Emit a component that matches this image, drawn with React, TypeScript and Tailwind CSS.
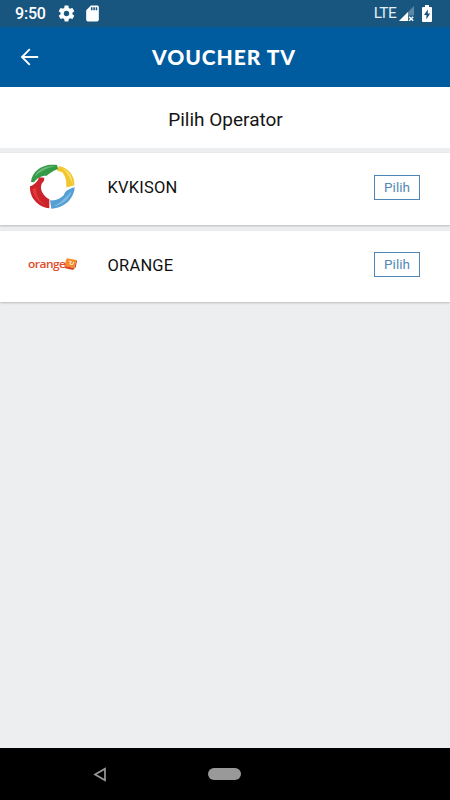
import type { ReactNode } from 'react'

function StatusBar() {
  return (
    <div className="flex h-[27px] items-center bg-[#18557f] text-white">
      <span className="ml-[15px] w-[42px] text-[16px] leading-[27px] font-medium tracking-[-0.2px]">9:50</span>
      <svg className="h-[19px] w-[19px] shrink-0" viewBox="0 0 24 24" fill="currentColor">
        <path d="M19.43 12.98c.04-.32.07-.64.07-.98s-.03-.66-.07-.98l2.11-1.65c.19-.15.24-.42.12-.64l-2-3.46c-.12-.22-.39-.3-.61-.22l-2.49 1c-.52-.4-1.08-.73-1.69-.98l-.38-2.65C14.46 2.18 14.25 2 14 2h-4c-.25 0-.46.18-.49.42l-.38 2.65c-.61.25-1.17.59-1.69.98l-2.49-1c-.23-.09-.49 0-.61.22l-2 3.46c-.13.22-.07.49.12.64l2.11 1.65c-.04.32-.07.65-.07.98s.03.66.07.98l-2.11 1.65c-.19.15-.24.42-.12.64l2 3.46c.12.22.39.3.61.22l2.49-1c.52.4 1.08.73 1.69.98l.38 2.65c.03.24.24.42.49.42h4c.25 0 .46-.18.49-.42l.38-2.65c.61-.25 1.17-.59 1.69-.98l2.49 1c.23.09.49 0 .61-.22l2-3.46c.12-.22.07-.49-.12-.64l-2.11-1.65zM12 15.5c-1.93 0-3.5-1.57-3.5-3.5s1.57-3.5 3.5-3.5 3.5 1.57 3.5 3.5-1.57 3.5-3.5 3.5z" />
      </svg>
      <svg className="ml-[7px] h-[19px] w-[19px] shrink-0" viewBox="0 0 24 24" fill="currentColor">
        <path d="M18 2h-8L4.02 8 4 20c0 1.1.9 2 2 2h12c1.1 0 2-.9 2-2V4c0-1.1-.9-2-2-2zm-6 6h-2V4h2v4zm3 0h-2V4h2v4zm3 0h-2V4h2v4z" />
      </svg>
      <span className="ml-auto text-[15.5px] leading-[27px] tracking-[-0.7px] text-[#e3eef5]">LTE</span>
      <svg className="ml-[3px] h-[16px] w-[16px] shrink-0" viewBox="0 0 16 16">
        <path d="M15 0v15H0z" fill="#fff" opacity=".3" />
        <path d="M9 6v9H0z" fill="#fff" />
        <path d="M9.5 9.5H16V16H9.5z" fill="#18557f" />
        <path d="m10.2 10.8 4 4m0-4-4 4" stroke="#fff" strokeWidth="1.5" />
      </svg>
      <svg className="mr-[18px] ml-[7px] h-[17px] w-[10px] shrink-0" viewBox="0 0 10 17">
        <path d="M3 0h4v2h2q1 0 1 1v13q0 1-1 1H1q-1 0-1-1V3q0-1 1-1h2z" fill="#fff" />
        <path d="M5.8 4.5 2 10h2.4v4.3L8.2 8.6H5.8z" fill="#18557f" />
      </svg>
    </div>
  )
}

function Header() {
  return (
    <header className="grid h-[60px] grid-cols-[60px_1fr_60px] items-center bg-[#005b9f] text-white">
      <svg className="ml-[20px] h-[18px] w-[19px]" viewBox="0 0 19 18" fill="none" stroke="currentColor" strokeWidth="1.9">
        <path d="M18.2 9H2.4M9.8 1.2 2 9l7.8 7.8" />
      </svg>
      <h1 className="-ml-[2px] scale-x-[1.05] pt-px text-center font-['Lato',sans-serif] text-[20px] leading-[59px] font-black tracking-[0.9px] whitespace-nowrap">
        VOUCHER TV
      </h1>
    </header>
  )
}

function KvisionLogo() {
  return (
    <svg className="-mt-[3px] h-[65px] w-[70px]" viewBox="0 0 210 195">
      <path d="M33 81C35 50 67 23 111 30L115 43C101 45 93 54 80 62C66 61 50 69 42 82Z" fill="#35994a" />
      <path d="M43 65C54 42 76 31 106 33C83 37 63 48 43 65Z" fill="#6cb879" />
      <path d="M117 33C146 39 165 64 163 91C156 92 148 97 139 97C140 79 137 65 127 52L111 47Z" fill="#f2c62e" />
      <path d="M129 40C148 50 158 67 158 88C151 72 144 57 129 40Z" fill="#f9df6d" />
      <path d="M164 97C162 132 132 160 94 161L90 136C106 138 120 132 132 120C134 108 149 101 164 97Z" fill="#549fd3" />
      <path d="M155 107C149 132 126 150 100 154C122 143 137 128 155 107Z" fill="#81bce5" />
      <path d="M30 94C39 92 47 84 54 75L57 67L73 68L72 77L65 86C58 103 69 122 88 133L88 160C54 157 28 128 30 94Z" fill="#cc2229" />
      <path d="M37 103C40 127 58 145 80 151C56 138 48 122 49 96Z" fill="#e0383a" />
    </svg>
  )
}

function OrangeLogo() {
  return (
    <div className="-mt-[5px] flex h-[40px] w-[70px] items-center pl-[8px]">
      <span className="w-[36px] origin-left scale-x-[1.14] font-['Open_Sans',sans-serif] text-[10.5px] leading-[16px] font-semibold tracking-[-0.45px] text-[#e24b2c]">
        orange
      </span>
      <svg className="h-[14px] w-[13px] shrink-0" viewBox="0 0 39 42">
        <path d="m8 4 29 5-6 24-30-6Z" fill="#f58a2b" />
        <path d="m1 27 30 6-4 6-23-5Z" fill="#d6411f" />
        <path d="m37 9-6 24-4 6 8-8 4-19Z" fill="#c9451f" />
        <path d="m14 12 8 2-5 7 9 2 3-8" fill="none" stroke="#fff2cf" strokeWidth="3" />
      </svg>
    </div>
  )
}

function OperatorRow({ name, logo }: { name: string; logo: ReactNode }) {
  return (
    <div className="flex h-full items-center bg-white shadow-[0_1px_2px_rgba(0,0,0,0.22)]">
      <div className="ml-[20px] w-[87px]">{logo}</div>
      <span className="-mt-px pl-[0.5px] text-[16.5px] tracking-[0.2px] text-[#111]">{name}</span>
      <button className="-mt-[4px] mr-[30px] ml-auto h-[25px] w-[46px] border border-[#4c87b8] text-[13.5px] leading-[23px] text-[#5288b8]">
        Pilih
      </button>
    </div>
  )
}

function NavBar() {
  return (
    <div className="flex h-[52px] items-center bg-black">
      <svg className="ml-[93px] h-[15px] w-[14px]" viewBox="0 0 14 15">
        <path d="M12 1.7v11.6L2 7.5z" fill="none" stroke="#999" strokeWidth="1.7" />
      </svg>
      <div className="ml-[101px] h-[12px] w-[33px] rounded-full bg-[#999]" />
    </div>
  )
}

export default function App() {
  return (
    <div className="flex h-[800px] w-[450px] flex-col overflow-hidden bg-[#edeeef] font-['Roboto',sans-serif]">
      <StatusBar />
      <Header />
      <div className="h-[61px] bg-white pt-px pl-px text-center text-[19px] leading-[63px] text-[#151515]">
        Pilih Operator
      </div>
      <main className="flex-1 pt-[5px]">
        <div className="h-[72px]">
          <OperatorRow name="KVKISON" logo={<KvisionLogo />} />
        </div>
        <div className="mt-[6px] h-[71px]">
          <OperatorRow name="ORANGE" logo={<OrangeLogo />} />
        </div>
      </main>
      <NavBar />
    </div>
  )
}
